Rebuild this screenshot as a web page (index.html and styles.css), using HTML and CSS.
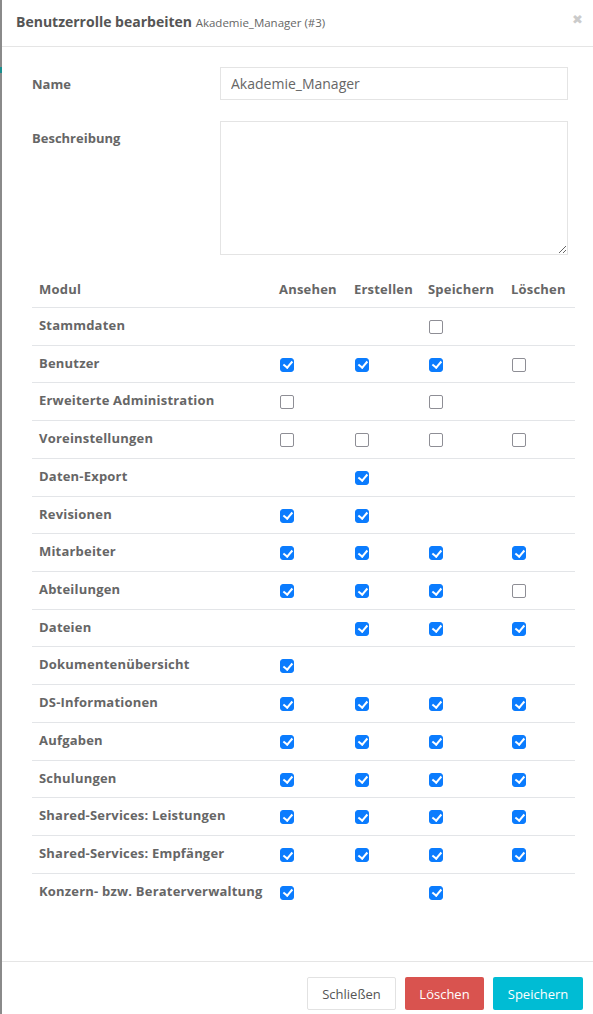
FILE: index.html
```html
<!DOCTYPE html>
<html lang="de">
<head>
<meta charset="utf-8">
<title>Benutzerrolle bearbeiten</title>
<link rel="stylesheet" href="styles.css">
</head>
<body>
<div class="modal">
  <span class="edge-mark"></span>
  <header class="modal-header">
    <h4 class="modal-title">Benutzerrolle bearbeiten <small>Akademie_Manager (#3)</small></h4>
    <span class="close">&#x2716;</span>
  </header>
  <main class="modal-body">
    <div class="form-row">
      <label class="form-label">Name</label>
      <input class="form-input" type="text" value="Akademie_Manager">
    </div>
    <div class="form-row">
      <label class="form-label">Beschreibung</label>
      <textarea class="form-textarea"></textarea>
    </div>
    <table class="perm-table">
      <colgroup>
        <col class="c-mod"><col class="c-a"><col class="c-e"><col class="c-s"><col class="c-l">
      </colgroup>
      <thead>
        <tr><th>Modul</th><th>Ansehen</th><th>Erstellen</th><th>Speichern</th><th>Löschen</th></tr>
      </thead>
      <tbody>
        <tr><td>Stammdaten</td><td></td><td></td><td><input type="checkbox" class="cb"></td><td></td></tr>
        <tr><td>Benutzer</td><td><input type="checkbox" class="cb" checked></td><td><input type="checkbox" class="cb" checked></td><td><input type="checkbox" class="cb" checked></td><td><input type="checkbox" class="cb"></td></tr>
        <tr><td>Erweiterte Administration</td><td><input type="checkbox" class="cb"></td><td></td><td><input type="checkbox" class="cb"></td><td></td></tr>
        <tr><td>Voreinstellungen</td><td><input type="checkbox" class="cb"></td><td><input type="checkbox" class="cb"></td><td><input type="checkbox" class="cb"></td><td><input type="checkbox" class="cb"></td></tr>
        <tr><td>Daten-Export</td><td></td><td><input type="checkbox" class="cb" checked></td><td></td><td></td></tr>
        <tr><td>Revisionen</td><td><input type="checkbox" class="cb" checked></td><td><input type="checkbox" class="cb" checked></td><td></td><td></td></tr>
        <tr><td>Mitarbeiter</td><td><input type="checkbox" class="cb" checked></td><td><input type="checkbox" class="cb" checked></td><td><input type="checkbox" class="cb" checked></td><td><input type="checkbox" class="cb" checked></td></tr>
        <tr><td>Abteilungen</td><td><input type="checkbox" class="cb" checked></td><td><input type="checkbox" class="cb" checked></td><td><input type="checkbox" class="cb" checked></td><td><input type="checkbox" class="cb"></td></tr>
        <tr><td>Dateien</td><td></td><td><input type="checkbox" class="cb" checked></td><td><input type="checkbox" class="cb" checked></td><td><input type="checkbox" class="cb" checked></td></tr>
        <tr><td>Dokumentenübersicht</td><td><input type="checkbox" class="cb" checked></td><td></td><td></td><td></td></tr>
        <tr><td>DS-Informationen</td><td><input type="checkbox" class="cb" checked></td><td><input type="checkbox" class="cb" checked></td><td><input type="checkbox" class="cb" checked></td><td><input type="checkbox" class="cb" checked></td></tr>
        <tr><td>Aufgaben</td><td><input type="checkbox" class="cb" checked></td><td><input type="checkbox" class="cb" checked></td><td><input type="checkbox" class="cb" checked></td><td><input type="checkbox" class="cb" checked></td></tr>
        <tr><td>Schulungen</td><td><input type="checkbox" class="cb" checked></td><td><input type="checkbox" class="cb" checked></td><td><input type="checkbox" class="cb" checked></td><td><input type="checkbox" class="cb" checked></td></tr>
        <tr><td>Shared-Services: Leistungen</td><td><input type="checkbox" class="cb" checked></td><td><input type="checkbox" class="cb" checked></td><td><input type="checkbox" class="cb" checked></td><td><input type="checkbox" class="cb" checked></td></tr>
        <tr><td>Shared-Services: Empfänger</td><td><input type="checkbox" class="cb" checked></td><td><input type="checkbox" class="cb" checked></td><td><input type="checkbox" class="cb" checked></td><td><input type="checkbox" class="cb" checked></td></tr>
        <tr><td>Konzern- bzw. Beraterverwaltung</td><td><input type="checkbox" class="cb" checked></td><td></td><td><input type="checkbox" class="cb" checked></td><td></td></tr>
      </tbody>
    </table>
  </main>
  <footer class="modal-footer">
    <button class="btn btn-default">Schließen</button>
    <button class="btn btn-danger">Löschen</button>
    <button class="btn btn-info">Speichern</button>
  </footer>
</div>
</body>
</html>
```
FILE: styles.css
```css
html, body {
  margin: 0;
  padding: 0;
  background: #fff;
}
body {
  font-family: "Open Sans", "Liberation Sans", sans-serif;
  color: #666;
}
.modal {
  position: relative;
  min-height: 1014px;
  border-left: 2px solid #8a8a8a;
  box-sizing: border-box;
}
.edge-mark {
  position: absolute;
  left: -2px;
  top: 67px;
  width: 2px;
  height: 6px;
  background: #1a8f8f;
}
.modal-header {
  position: relative;
  height: 47px;
  border-bottom: 1px solid #e5e5e5;
  box-sizing: border-box;
  padding: 12px 14px 0 14px;
}
.modal-title {
  margin: 0;
  font-size: 14px;
  font-weight: 700;
  color: #555;
  line-height: 20px;
}
.modal-title small {
  font-size: 11.5px;
  font-weight: 400;
  color: #666;
}
.close {
  position: absolute;
  right: 10px;
  top: 11px;
  font-size: 13px;
  color: #cbcbcb;
  line-height: 16px;
}
.modal-body {
  padding: 20px 18px 50px 30px;
}
.form-row {
  display: flex;
  align-items: flex-start;
  margin-bottom: 21px;
}
.form-row:nth-child(2) {
  margin-bottom: 15px;
}
.form-label {
  width: 188px;
  flex: none;
  font-size: 13px;
  font-weight: 700;
  color: #666;
  padding-top: 7px;
  line-height: 20px;
}
.form-input {
  width: 348px;
  height: 33px;
  box-sizing: border-box;
  border: 1px solid #e4e4e4;
  border-radius: 0;
  padding: 0 10px;
  font-family: inherit;
  font-size: 14px;
  color: #666;
  outline: none;
  margin: 0;
}
.form-textarea {
  width: 348px;
  height: 134px;
  box-sizing: border-box;
  border: 1px solid #e4e4e4;
  border-radius: 0;
  padding: 6px 10px;
  font-family: inherit;
  font-size: 14px;
  margin: 0;
  display: block;
  outline: none;
}
.perm-table {
  width: 543px;
  border-collapse: collapse;
  table-layout: fixed;
}
.c-mod { width: 240px; }
.c-a { width: 75px; }
.c-e { width: 74px; }
.c-s { width: 83px; }
.c-l { width: 71px; }
.perm-table th,
.perm-table td {
  text-align: left;
  line-height: 20px;
  font-size: 13px;
  font-weight: 700;
  color: #666;
  vertical-align: top;
  white-space: nowrap;
  letter-spacing: 0.2px;
}
.perm-table th {
  padding: 9px 7px 8px 7px;
}
.perm-table td {
  padding: 7px 7px 9.73px 7px;
}
.perm-table thead th {
  border-bottom: 1px solid #e3e5e8;
}
.perm-table tbody tr + tr td {
  border-top: 1px solid #e3e5e8;
}
.cb {
  appearance: none;
  -webkit-appearance: none;
  width: 14px;
  height: 14px;
  box-sizing: border-box;
  border: 1.5px solid #8e8e95;
  border-radius: 2px;
  margin: 5px 0 0 1px;
  padding: 0;
  background: #fff;
  position: relative;
  display: block;
}
.cb:checked {
  background: #0b7cfe;
  border-color: #0b7cfe;
  border-radius: 3px;
}
.cb:checked::after {
  content: "";
  position: absolute;
  left: 3.5px;
  top: 0.5px;
  width: 3.5px;
  height: 7px;
  border-right: 2px solid #fff;
  border-bottom: 2px solid #fff;
  transform: rotate(40deg);
}
.modal-footer {
  position: absolute;
  left: 0;
  right: 0;
  top: 961px;
  border-top: 1px solid #e5e5e5;
  display: flex;
  justify-content: flex-end;
  gap: 9px;
  padding: 15px 10px 0 0;
}
.btn {
  height: 33px;
  box-sizing: border-box;
  font-family: inherit;
  font-size: 13px;
  font-weight: 400;
  padding: 0 12px;
  border-radius: 2px;
  border: 1px solid transparent;
  cursor: pointer;
}
.btn-default {
  width: 89px;
  background: #fff;
  border-color: #e2e2e2;
  color: #555;
}
.btn-danger {
  width: 79px;
  background: #d9534f;
  color: #fff;
}
.btn-info {
  width: 90px;
  background: #00bcd4;
  color: #fff;
}
```
